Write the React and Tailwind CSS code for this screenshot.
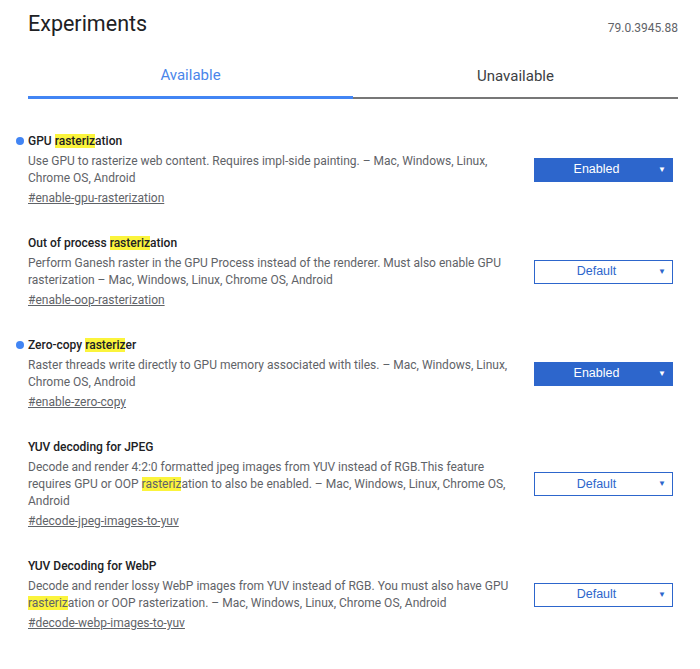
import React from "react";

const font = { fontFamily: "Roboto, 'Liberation Sans', sans-serif" };

const hl = <mark key="m" className="bg-[#fbf43c] text-inherit">rasteriz</mark>;

const flags = [
  {
    title: ["GPU ", hl, "ation"],
    desc: ["Use GPU to rasterize web content. Requires impl-side painting. – Mac, Windows, Linux, Chrome OS, Android"],
    link: "#enable-gpu-rasterization",
    enabled: true,
  },
  {
    title: ["Out of process ", hl, "ation"],
    desc: ["Perform Ganesh raster in the GPU Process instead of the renderer. Must also enable GPU rasterization – Mac, Windows, Linux, Chrome OS, Android"],
    link: "#enable-oop-rasterization",
  },
  {
    title: ["Zero-copy ", hl, "er"],
    desc: ["Raster threads write directly to GPU memory associated with tiles. – Mac, Windows, Linux, Chrome OS, Android"],
    link: "#enable-zero-copy",
    enabled: true,
  },
  {
    title: ["YUV decoding for JPEG"],
    desc: [
      "Decode and render 4:2:0 formatted jpeg images from YUV instead of RGB.This feature requires GPU or OOP ",
      hl,
      "ation to also be enabled. – Mac, Windows, Linux, Chrome OS, Android",
    ],
    link: "#decode-jpeg-images-to-yuv",
  },
  {
    title: ["YUV Decoding for WebP"],
    desc: [
      "Decode and render lossy WebP images from YUV instead of RGB. You must also have GPU ",
      hl,
      "ation or OOP rasterization. – Mac, Windows, Linux, Chrome OS, Android",
    ],
    link: "#decode-webp-images-to-yuv",
  },
];

function Select({ enabled }) {
  return (
    <div
      className={
        "relative w-[139px] h-[24px] flex items-center justify-center pr-[14px] text-[12.5px] border " +
        (enabled ? "bg-[#2d66cc] border-[#2d66cc] text-white" : "bg-white border-[#2d66cc] text-[#2d66cc]")
      }
      style={{ fontFamily: "'Liberation Sans', Arial, sans-serif" }}
    >
      {enabled ? "Enabled" : "Default"}
      <span className="absolute right-[6px] top-[5px] text-[8px]">▼</span>
    </div>
  );
}

export default function App() {
  return (
    <div className="w-[700px] h-[669px] bg-white overflow-hidden" style={font}>
      <div className="pl-[28px] w-[678px]">
        <div className="flex justify-between items-end h-[38px]">
          <h1 className="text-[21.5px] leading-[28px] text-[#202124]">Experiments</h1>
          <span className="text-[12px] text-[#5f6368] mb-[1px]">79.0.3945.88</span>
        </div>
        <div className="flex mt-[17px] h-[44px] border-b-[2px] border-[#777]">
          <div className="w-1/2 flex items-center justify-center text-[15px] text-[#4a86ea] border-b-[3px] border-[#4285f4] -mb-[2px]">
            Available
          </div>
          <div className="w-1/2 flex items-center justify-center text-[15px] text-[#3c4043]">Unavailable</div>
        </div>

        <div className="mt-[33px] flex flex-col gap-[27px]">
          {flags.map((f) => (
            <div key={f.link} className="flex items-center justify-between pr-[5px]">
              <div className="w-[495px] relative">
                {f.enabled && (
                  <span className="absolute -left-[12px] top-[5px] w-[8px] h-[8px] rounded-full bg-[#4285f4]" />
                )}
                <h2 className="text-[12px] leading-[18px] font-medium text-[#202124]">{f.title}</h2>
                <p className="mt-[3px] text-[12px] leading-[17px] text-[#5f6368]">{f.desc}</p>
                <a className="block mt-[3px] text-[12px] leading-[17px] text-[#5f6368] underline">{f.link}</a>
              </div>
              <Select enabled={f.enabled} />
            </div>
          ))}
        </div>
      </div>
    </div>
  );
}
